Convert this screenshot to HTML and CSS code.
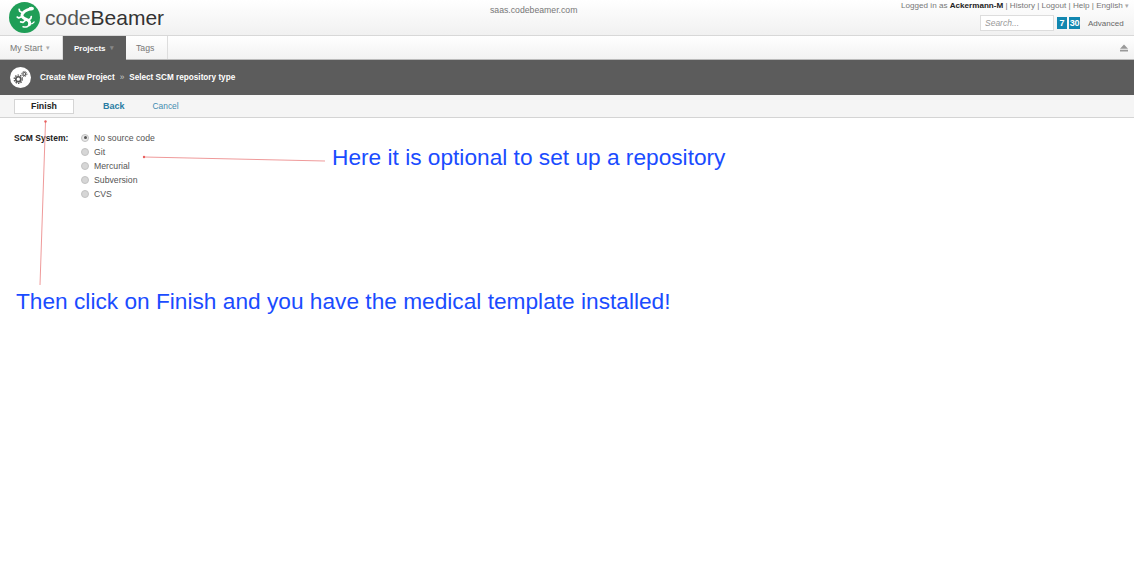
FILE: index.html
```html
<!DOCTYPE html>
<html lang="en">
<head>
<meta charset="utf-8">
<title>codeBeamer</title>
<link rel="stylesheet" href="styles.css">
</head>
<body>
<header class="top">
  <div class="brand">
    <svg class="logo" viewBox="0 0 32 32" width="31" height="31">
      <circle cx="16" cy="16" r="16" fill="#1f9e57"/>
      <g fill="none" stroke="#fff" stroke-linecap="round" stroke-linejoin="round">
        <path d="M22 7C18.500 8 14.500 10 13.500 13C12.800 15.500 15.500 17 18 18C20.500 19 22 21 21 23.500" stroke-width="3"/>
        <path d="M21.500 22.500C20.500 25.500 17.500 26.500 14.500 25.500" stroke-width="1.600"/>
        <path d="M21.500 23C23.500 23 25 22 26 20.500" stroke-width="1.200"/>
        <path d="M14 11L11 9.500L10.500 7.500" stroke-width="1.700"/>
        <path d="M13.500 15L10 16.500L8.500 15.500" stroke-width="1.700"/>
        <path d="M17.500 18.500L14.500 21L12 20.500" stroke-width="1.700"/>
        <path d="M20 18.500L22.500 17L23 15" stroke-width="1.700"/>
      </g>
      <ellipse cx="23" cy="6.800" rx="2.800" ry="2" fill="#fff"/>
    </svg>
    <span class="wordmark"><span class="wm-light">code</span>Beamer</span>
  </div>
  <div class="host">saas.codebeamer.com</div>
  <div class="account">
    <div class="user-line">Logged in as <b>Ackermann-M</b> | History | Logout | Help | English <span class="caret">▾</span></div>
    <div class="search-line">
      <input class="search" type="text" placeholder="Search...">
      <span class="badge badge-7">7</span><span class="badge badge-30">30</span>
      <span class="advanced">Advanced</span>
    </div>
  </div>
</header>

<nav class="tabs">
  <a class="tab tab-start">My Start <span class="caret">▾</span></a>
  <a class="tab tab-active">Projects <span class="caret">▾</span></a>
  <a class="tab tab-tags">Tags</a>
  <span class="eject">
    <svg viewBox="0 0 8 8" width="8" height="8"><path d="M4 0.500 8 4.800H0Z M0 5.800H8V7.600H0Z" fill="#999"/></svg>
  </span>
</nav>

<div class="crumbs">
  <span class="crumb-icon">
    <svg viewBox="0 0 22 22" width="21" height="21">
      <circle cx="11" cy="11" r="11" fill="#fff"/>
      <circle cx="8.700" cy="12.800" r="2.600" fill="none" stroke="#555" stroke-width="1.800"/>
      <circle cx="8.700" cy="12.800" r="4.300" fill="none" stroke="#555" stroke-width="1.400" stroke-dasharray="1.500 1.200"/>
      <circle cx="15" cy="7.300" r="1.500" fill="none" stroke="#555" stroke-width="1.200"/>
      <circle cx="15" cy="7.300" r="2.700" fill="none" stroke="#555" stroke-width="1" stroke-dasharray="1.200 .9"/>
    </svg>
  </span>
  <span class="crumb-text">Create New Project</span>
  <span class="crumb-sep">»</span>
  <span class="crumb-text">Select SCM repository type</span>
</div>

<div class="actions">
  <button class="finish" type="button">Finish</button>
  <a class="back">Back</a>
  <a class="cancel">Cancel</a>
</div>

<main class="form">
  <div class="label">SCM System:</div>
  <div class="options">
    <label class="option"><span class="radio radio-on"></span>No source code</label>
    <label class="option"><span class="radio"></span>Git</label>
    <label class="option"><span class="radio"></span>Mercurial</label>
    <label class="option"><span class="radio"></span>Subversion</label>
    <label class="option"><span class="radio"></span>CVS</label>
  </div>
</main>

<svg class="arrows" width="1134" height="580" viewBox="0 0 1134 580">
  <g stroke="#ef9a9a" stroke-width="1" fill="#e9605f">
    <line x1="325" y1="161" x2="144" y2="157"/>
    <line x1="40" y1="285" x2="45.500" y2="122"/>
    <circle cx="144" cy="157" r="1.200" stroke="none"/>
    <circle cx="45.500" cy="121.500" r="1.200" stroke="none"/>
  </g>
</svg>
<div class="note note-repo">Here it is optional to set up a repository</div>
<div class="note note-finish">Then click on Finish and you have the medical template installed!</div>
</body>
</html>
```

FILE: styles.css
```css
* { box-sizing: border-box; }
html, body { margin: 0; padding: 0; }
body {
  position: relative;
  width: 1134px;
  height: 580px;
  overflow: hidden;
  background: #fff;
  font-family: "Liberation Sans", Arial, sans-serif;
  font-size: 9px;
  color: #555;
}
.top {
  height: 36px;
  display: flex;
  justify-content: space-between;
  background: linear-gradient(#fff, #f1f1f1);
  border-bottom: 1px solid #d8d8d8;
}
.brand { width: 350px; display: flex; align-items: flex-start; padding: 2px 0 0 9px; }
.logo { flex: none; }
.wordmark {
  margin: 5px 0 0 5px;
  font-size: 21px;
  line-height: 22px;
  color: #333;
}
.wm-light { color: #555; }
.host { padding-top: 5px; color: #777; font-size: 8.700px; line-height: 11px; width: 300px; margin-left: 140px; }
.account { flex: 1; text-align: right; padding-right: 5px; }
.user-line { line-height: 11px; color: #777; font-size: 8.100px; white-space: nowrap; }
.user-line b { color: #222; }
.caret { font-size: 7px; color: #aaa; }
.search-line { display: flex; justify-content: flex-end; align-items: center; margin-top: 4px; padding-right: 6px; }
.search {
  width: 74px; height: 16px; margin: 0 3px 0 0; padding: 0 4px;
  border: 1px solid #ddd; background: #fff;
  font: italic 8.500px "Liberation Sans", Arial, sans-serif;
}
.search::placeholder { color: #999; }
.badge {
  width: 11px; height: 12px;
  background: #1287b0; color: #fff;
  font-weight: 700; font-size: 9px; line-height: 12px; text-align: center;
}
.badge-7 { width: 10px; margin-right: 2px; }
.badge-30 { letter-spacing: -0.300px; }
.advanced { margin-left: 8px; width: 35px; text-align: left; font-size: 8px; color: #666; white-space: nowrap; }

.tabs {
  height: 24px;
  display: flex;
  background: linear-gradient(#fff, #f2f2f2);
  border-bottom: 1px solid #bbb;
  font-size: 8.700px;
}
.tab { display: flex; align-items: center; gap: 4px; padding: 0 10px; height: 23px; color: #777; border-right: 1px solid #ddd; }
.tab-start { width: 63px; }
.tab-active { width: 63px; background: #5c5c5c; color: #fff; font-weight: 700; font-size: 8px; padding-left: 11px; border: 0; height: 24px; }
.tab-active .caret { color: #888; }
.tab-tags { width: 42px; padding-left: 10px; }
.eject { margin-left: auto; padding: 8px 6px 0 0; line-height: 0; }

.crumbs {
  height: 35px;
  display: flex;
  align-items: center;
  padding-left: 10px;
  background: #5c5c5c;
  color: #fff;
  font-weight: 700;
  font-size: 8.200px;
}
.crumb-icon { width: 21px; height: 21px; margin-right: 9px; line-height: 0; }
.crumb-sep { margin: 0 5px; color: #ccc; font-weight: 400; }

.actions {
  height: 23px;
  display: flex;
  align-items: center;
  padding-left: 14px;
  background: #f5f5f5;
  border-bottom: 1px solid #d4d4d4;
}
.finish {
  width: 60px; height: 15px; padding: 0;
  background: #fff; border: 1px solid #d5d5d5;
  font: 700 8.800px "Liberation Sans", Arial, sans-serif; color: #222;
}
.back { margin-left: 29px; color: #2a7ca3; font-weight: 700; }
.cancel { margin-left: 28px; color: #3f8bb0; font-size: 8.400px; }

.form { display: flex; padding: 13px 0 0 14px; font-size: 8.700px; }
.label { width: 67px; padding-top: 1px; font-weight: 700; font-size: 8.500px; color: #222; line-height: 13px; }
.options { display: flex; flex-direction: column; gap: 1px; }
.option { display: flex; align-items: center; height: 13px; color: #555; }
.radio {
  width: 8px; height: 8px; margin-right: 5px; border-radius: 50%;
  background: #d6d6d6; border: 1px solid #c2c2c2;
  position: relative;
}
.radio-on { background: #e8e8e8; }
.radio-on::after {
  content: ""; position: absolute; left: 1.500px; top: 1.500px;
  width: 3px; height: 3px; border-radius: 50%; background: #555;
}

.arrows { position: absolute; left: 0; top: 0; pointer-events: none; }
.note {
  position: absolute;
  font-size: 22.700px;
  line-height: 26px;
  color: #1a4cff;
  white-space: nowrap;
}
.note-repo { left: 332px; top: 144px; }
.note-finish { left: 16px; top: 288px; }
```
